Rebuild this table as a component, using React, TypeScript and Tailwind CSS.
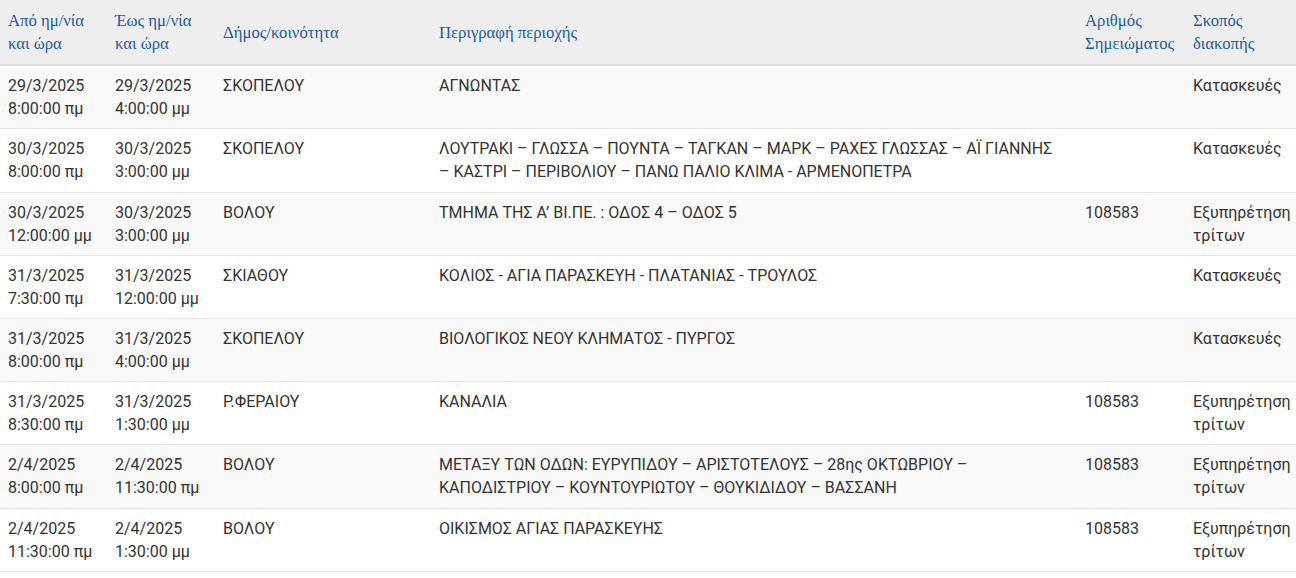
import React from "react";

type Row = { from: [string, string]; to: [string, string]; dim: string; desc: string; num: string; purpose: string };

const rows: Row[] = [
  { from: ["29/3/2025", "8:00:00 πμ"], to: ["29/3/2025", "4:00:00 μμ"], dim: "ΣΚΟΠΕΛΟΥ", desc: "ΑΓΝΩΝΤΑΣ", num: "", purpose: "Κατασκευές" },
  { from: ["30/3/2025", "8:00:00 πμ"], to: ["30/3/2025", "3:00:00 μμ"], dim: "ΣΚΟΠΕΛΟΥ", desc: "ΛΟΥΤΡΑΚΙ – ΓΛΩΣΣΑ – ΠΟΥΝΤΑ – ΤΑΓΚΑΝ – ΜΑΡΚ – ΡΑΧΕΣ ΓΛΩΣΣΑΣ – ΑΪ ΓΙΑΝΝΗΣ – ΚΑΣΤΡΙ – ΠΕΡΙΒΟΛΙΟΥ – ΠΑΝΩ ΠΑΛΙΟ ΚΛΙΜΑ - ΑΡΜΕΝΟΠΕΤΡΑ", num: "", purpose: "Κατασκευές" },
  { from: ["30/3/2025", "12:00:00 μμ"], to: ["30/3/2025", "3:00:00 μμ"], dim: "ΒΟΛΟΥ", desc: "ΤΜΗΜΑ ΤΗΣ Α’ ΒΙ.ΠΕ. : ΟΔΟΣ 4 – ΟΔΟΣ 5", num: "108583", purpose: "Εξυπηρέτηση τρίτων" },
  { from: ["31/3/2025", "7:30:00 πμ"], to: ["31/3/2025", "12:00:00 μμ"], dim: "ΣΚΙΑΘΟΥ", desc: "ΚΟΛΙΟΣ - ΑΓΙΑ ΠΑΡΑΣΚΕΥΗ - ΠΛΑΤΑΝΙΑΣ - ΤΡΟΥΛΟΣ", num: "", purpose: "Κατασκευές" },
  { from: ["31/3/2025", "8:00:00 πμ"], to: ["31/3/2025", "4:00:00 μμ"], dim: "ΣΚΟΠΕΛΟΥ", desc: "ΒΙΟΛΟΓΙΚΟΣ ΝΕΟΥ ΚΛΗΜΑΤΟΣ - ΠΥΡΓΟΣ", num: "", purpose: "Κατασκευές" },
  { from: ["31/3/2025", "8:30:00 πμ"], to: ["31/3/2025", "1:30:00 μμ"], dim: "Ρ.ΦΕΡΑΙΟΥ", desc: "ΚΑΝΑΛΙΑ", num: "108583", purpose: "Εξυπηρέτηση τρίτων" },
  { from: ["2/4/2025", "8:00:00 πμ"], to: ["2/4/2025", "11:30:00 πμ"], dim: "ΒΟΛΟΥ", desc: "ΜΕΤΑΞΥ ΤΩΝ ΟΔΩΝ: ΕΥΡΥΠΙΔΟΥ – ΑΡΙΣΤΟΤΕΛΟΥΣ – 28ης ΟΚΤΩΒΡΙΟΥ – ΚΑΠΟΔΙΣΤΡΙΟΥ – ΚΟΥΝΤΟΥΡΙΩΤΟΥ – ΘΟΥΚΙΔΙΔΟΥ – ΒΑΣΣΑΝΗ", num: "108583", purpose: "Εξυπηρέτηση τρίτων" },
  { from: ["2/4/2025", "11:30:00 πμ"], to: ["2/4/2025", "1:30:00 μμ"], dim: "ΒΟΛΟΥ", desc: "ΟΙΚΙΣΜΟΣ ΑΓΙΑΣ ΠΑΡΑΣΚΕΥΗΣ", num: "108583", purpose: "Εξυπηρέτηση τρίτων" },
];

const th = "px-2 pt-[9px] pb-[9px] align-middle text-left font-normal text-[16.7px] text-[#1d5aa3] border-b-2 border-[#dddddd]";
const td = "px-2 pt-[8px] pb-[8px] align-top border-b border-[#e4e4e4]";

export default function App() {
  return (
    <div className="w-[1296px] h-[578px] overflow-hidden bg-white">
      <table
        className="w-[1300px] table-fixed border-collapse text-[16px] leading-[23.1px] text-[#333333]"
        style={{ fontFamily: "Roboto, 'Noto Sans', sans-serif" }}
      >
        <colgroup>
          <col className="w-[107px]" />
          <col className="w-[108px]" />
          <col className="w-[216px]" />
          <col className="w-[646px]" />
          <col className="w-[108px]" />
          <col />
        </colgroup>
        <thead className="bg-[#eeeeee]" style={{ fontFamily: "'Liberation Serif', 'DejaVu Serif', serif" }}>
          <tr>
            <th className={th}>Από ημ/νία<br />και ώρα</th>
            <th className={th}>Έως ημ/νία<br />και ώρα</th>
            <th className={th}>Δήμος/κοινότητα</th>
            <th className={th}>Περιγραφή περιοχής</th>
            <th className={th}>Αριθμός<br />Σημειώματος</th>
            <th className={th}>Σκοπός<br />διακοπής</th>
          </tr>
        </thead>
        <tbody>
          {rows.map((r, i) => (
            <tr key={i} className={i % 2 === 0 ? "bg-[#f9f9f9]" : "bg-white"}>
              <td className={td}>{r.from[0]}<br />{r.from[1]}</td>
              <td className={td}>{r.to[0]}<br />{r.to[1]}</td>
              <td className={td}>{r.dim}</td>
              <td className={`${td} pr-[20px]`}>{r.desc}</td>
              <td className={td}>{r.num}</td>
              <td className={`${td} whitespace-nowrap`}>
                {r.purpose.split(" ").map((w, j) => (
                  <div key={j}>{w}</div>
                ))}
              </td>
            </tr>
          ))}
        </tbody>
      </table>
    </div>
  );
}
